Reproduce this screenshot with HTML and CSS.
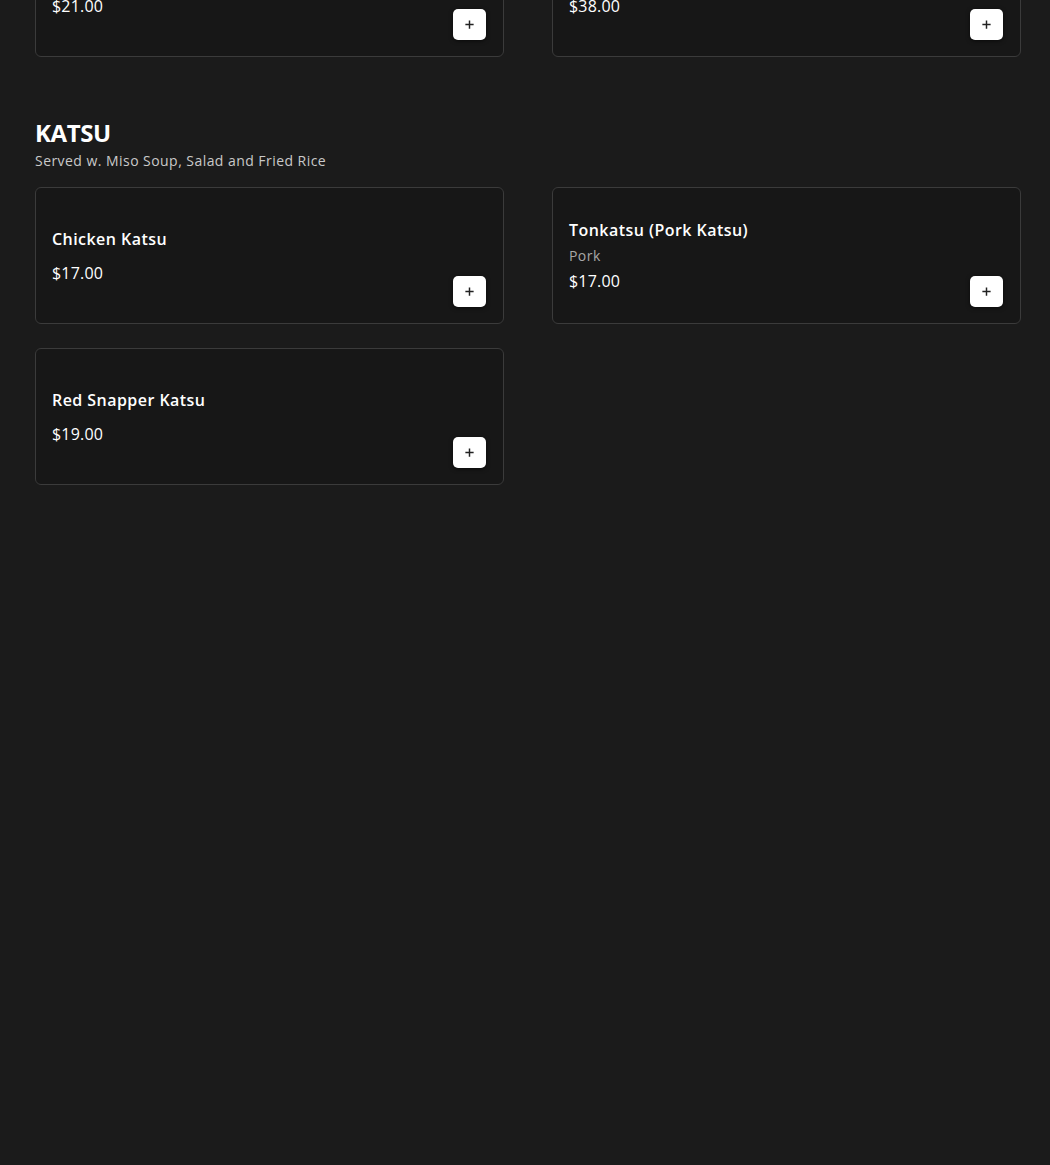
FILE: index.html
```html
<!DOCTYPE html>
<html lang="en">

<head>
    <meta charset="UTF-8">
    <meta name="viewport" content="width=device-width, initial-scale=1.0">
    <title>Menu - Katsu</title>
    <link rel="stylesheet" href="styles.css">
</head>

<body>
    <main class="menu">
        <!-- previous category, scrolled mostly out of view -->
        <section class="category category-prev">
            <div class="item-grid">
                <div class="item-card">
                    <div class="item-info">
                        <h3 class="item-title">Chicken Teriyaki Bento</h3>
                        <p class="item-price">$21.00</p>
                    </div>
                    <button class="add-btn" type="button" aria-label="Add">
                        <svg viewBox="0 0 12 12" width="11" height="11"><path d="M6 1.5v9M1.5 6h9" /></svg>
                    </button>
                </div>
                <div class="item-card">
                    <div class="item-info">
                        <h3 class="item-title">Deluxe Bento Box</h3>
                        <p class="item-price">$38.00</p>
                    </div>
                    <button class="add-btn" type="button" aria-label="Add">
                        <svg viewBox="0 0 12 12" width="11" height="11"><path d="M6 1.5v9M1.5 6h9" /></svg>
                    </button>
                </div>
            </div>
        </section>

        <section class="category">
            <h2 class="category-title">KATSU</h2>
            <p class="category-note">Served w. Miso Soup, Salad and Fried Rice</p>

            <div class="item-grid">
                <div class="item-card">
                    <div class="item-info">
                        <h3 class="item-title">Chicken Katsu</h3>
                        <p class="item-price">$17.00</p>
                    </div>
                    <button class="add-btn" type="button" aria-label="Add">
                        <svg viewBox="0 0 12 12" width="11" height="11"><path d="M6 1.5v9M1.5 6h9" /></svg>
                    </button>
                </div>

                <div class="item-card">
                    <div class="item-info">
                        <h3 class="item-title">Tonkatsu (Pork Katsu)</h3>
                        <p class="item-desc">Pork</p>
                        <p class="item-price">$17.00</p>
                    </div>
                    <button class="add-btn" type="button" aria-label="Add">
                        <svg viewBox="0 0 12 12" width="11" height="11"><path d="M6 1.5v9M1.5 6h9" /></svg>
                    </button>
                </div>

                <div class="item-card">
                    <div class="item-info">
                        <h3 class="item-title">Red Snapper Katsu</h3>
                        <p class="item-price">$19.00</p>
                    </div>
                    <button class="add-btn" type="button" aria-label="Add">
                        <svg viewBox="0 0 12 12" width="11" height="11"><path d="M6 1.5v9M1.5 6h9" /></svg>
                    </button>
                </div>
            </div>
        </section>
    </main>
</body>

</html>
```

FILE: styles.css
```css
* {
    padding: 0;
    margin: 0;
    box-sizing: border-box;
}

body {
    background: #1b1b1b;
    color: #ffffff;
    font-family: "Open Sans", "DejaVu Sans", sans-serif;
    letter-spacing: 0.45px;
}

.menu {
    padding: 0 29px 40px 35px;
}

.category {
    margin-top: 61px;
}

.category-prev {
    margin-top: -80px;
}

.category-title {
    font-size: 24px;
    line-height: 29px;
    font-weight: 700;
    letter-spacing: -0.4px;
}

.category-note {
    font-size: 14px;
    line-height: 20px;
    color: #c9c9c9;
    margin-top: 4px;
    margin-bottom: 16px;
}

.item-grid {
    display: grid;
    grid-template-columns: 1fr 1fr;
    column-gap: 48px;
    row-gap: 24px;
}

.item-card {
    display: flex;
    justify-content: space-between;
    align-items: center;
    height: 137px;
    padding: 16px 17px 16px 16px;
    border: 1px solid #3b3b3b;
    border-radius: 6px;
    background: #171717;
}

.item-title {
    font-size: 16px;
    line-height: 24px;
    font-weight: 600;
    margin-bottom: 4px;
}

.item-title + .item-price {
    margin-top: 10px;
}

.item-desc {
    font-size: 14px;
    line-height: 20px;
    color: #a8a8a8;
    margin-bottom: 3px;
}

.item-price {
    font-size: 16px;
    line-height: 24px;
    font-weight: 400;
    letter-spacing: 0.2px;
}

.add-btn {
    align-self: flex-end;
    width: 33px;
    height: 31px;
    display: flex;
    align-items: center;
    justify-content: center;
    background: #ffffff;
    border: none;
    border-radius: 5px;
    box-shadow: 0 1px 4px rgba(0, 0, 0, 0.6);
    cursor: pointer;
}

.add-btn svg {
    stroke: #222;
    stroke-width: 1.6;
    fill: none;
}
```
